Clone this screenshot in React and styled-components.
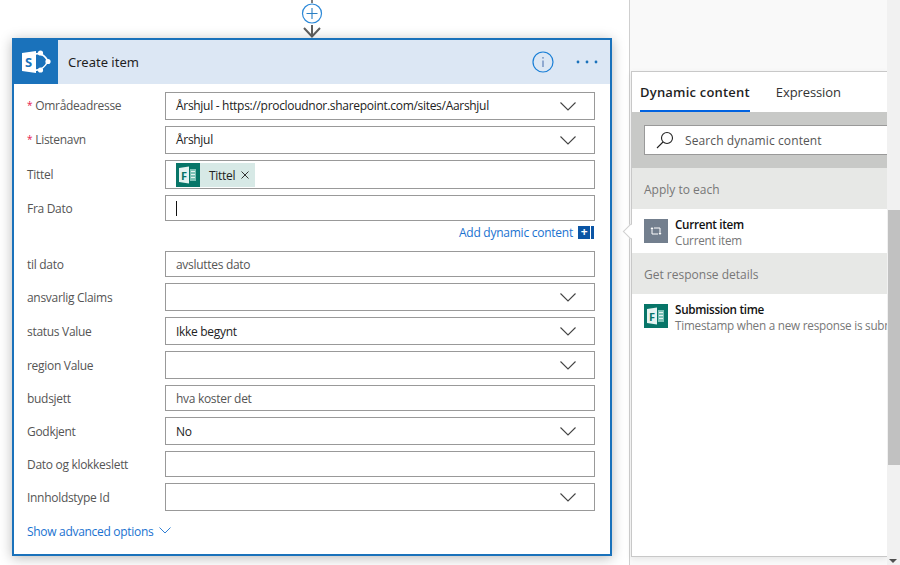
import React from 'react';
import styled, { createGlobalStyle } from 'styled-components';

const GlobalStyle = createGlobalStyle`
  html, body {
    margin: 0;
    padding: 0;
    height: 100%;
    overflow: hidden;
    background: #fff;
    font-family: "Open Sans", "Noto Sans", sans-serif;
  }
  * { box-sizing: border-box; }
`;

const Page = styled.div`
  display: flex;
  width: 900px;
  height: 565px;
  overflow: hidden;
`;

const Designer = styled.div`
  flex: 0 0 629px;
  display: flex;
  flex-direction: column;
  padding-left: 12px;
  background: #fff;
`;

const Connector = styled.svg`
  display: block;
  margin-left: 286px;
  flex: none;
`;

const Card = styled.section`
  width: 600px;
  height: 518px;
  border: 2px solid #1a72bb;
  background: #fff;
  box-shadow: 0 2px 12px rgba(0, 0, 0, 0.28);
`;

const CardHeader = styled.header`
  display: flex;
  align-items: center;
  height: 44px;
  background: #dce7f4;
`;

const Logo = styled.div`
  flex: 0 0 44px;
  height: 44px;
  background: #1a72bb;
  display: flex;
  align-items: center;
  justify-content: center;
`;

const CardTitle = styled.h2`
  flex: 1;
  margin: 0 0 0 10px;
  font-size: 13px;
  font-weight: 400;
  color: #1f1f1f;
  font-family: "Noto Sans", sans-serif;
`;

const HeaderIcon = styled.svg`
  display: block;
  margin-right: ${(p) => p.$gap}px;
`;

const Form = styled.div`
  display: flex;
  flex-direction: column;
  padding: 8px 16px 0 13px;
`;

const Row = styled.div`
  display: flex;
  align-items: flex-start;
  margin-bottom: 6px;
`;

const Label = styled.div`
  flex: 0 0 138px;
  height: ${(p) => p.$h}px;
  padding-bottom: ${(p) => (p.$raised ? 2 : 0)}px;
  display: flex;
  align-items: center;
  font-size: 12px;
  letter-spacing: -0.3px;
  color: #555;
`;

const Star = styled.span`
  color: #e5174d;
  font-size: 10px;
  margin-right: 3px;
`;

const Field = styled.div`
  position: relative;
  flex: 0 0 430px;
  height: ${(p) => p.$h}px;
  border: 1px solid #999;
  background: #fff;
  display: flex;
  align-items: center;
  padding-left: 10px;
  font-size: 12px;
  letter-spacing: -0.3px;
  color: ${(p) => (p.$muted ? '#555' : '#222')};
`;

const FieldText = styled.span`
  flex: 1;
  white-space: nowrap;
  padding-bottom: ${(p) => (p.$raised ? 2 : 0)}px;
`;

const Chevron = styled.svg`
  flex: none;
  margin-right: 18px;
  display: block;
`;

const Token = styled.div`
  display: flex;
  align-items: center;
  height: 24px;
  margin-top: 1px;
  background: #d7e9e6;
  padding-right: 6px;
`;

const TokenName = styled.span`
  margin: 0 6px 0 9px;
  font-size: 12px;
  color: #222;
`;

const Caret = styled.span`
  width: 1px;
  height: 15px;
  background: #111;
`;

const DynamicRow = styled.div`
  display: flex;
  justify-content: flex-end;
  align-items: center;
  height: 16px;
  margin: -3px 0 11px;
  font-size: 12px;
  letter-spacing: -0.25px;
  color: #1a72d0;
`;

const AddButton = styled.span`
  display: flex;
  margin-left: 5px;
  height: 13px;
  width: 16px;
  background: #0b55a5;
  color: #fff;
  font-size: 12px;
  font-weight: 700;
  line-height: 12px;
  justify-content: center;
  padding-right: 4px;
  box-shadow: inset -3px 0 0 #0b55a5, inset -4px 0 0 #fff;
`;

const Advanced = styled.div`
  display: flex;
  align-items: center;
  gap: 6px;
  margin-top: 6px;
  font-size: 12px;
  letter-spacing: -0.3px;
  color: #1a72d0;
`;

const SidePane = styled.aside`
  position: relative;
  flex: 1;
  display: flex;
  background: #f9f9f9;
  border-left: 1px solid #cfcfcf;
  padding-left: 1px;
`;

const Panel = styled.div`
  flex: 0 0 256px;
  display: flex;
  flex-direction: column;
  margin: 71px 0 8px;
  border: 1px solid #c8c8c8;
  border-right: none;
  background: #fff;
  overflow: hidden;
  box-shadow: 0 2px 6px rgba(0, 0, 0, 0.08);
`;

const Notch = styled.span`
  position: absolute;
  left: -5px;
  top: 226px;
  width: 11px;
  height: 11px;
  background: #fff;
  border-left: 1px solid #d0d0d0;
  border-bottom: 1px solid #d0d0d0;
  transform: rotate(45deg);
  z-index: 1;
`;

const Tabs = styled.div`
  display: flex;
  gap: 26px;
  height: 40px;
  padding-left: 8px;
  flex: none;
`;

const Tab = styled.div`
  display: flex;
  align-items: center;
  height: 40px;
  font-size: 13px;
  padding-top: 1px;
  color: ${(p) => (p.$active ? '#1f1f1f' : '#333')};
  font-weight: ${(p) => (p.$active ? 600 : 400)};
  letter-spacing: ${(p) => (p.$active ? 0.2 : -0.1)}px;
  border-bottom: 2px solid ${(p) => (p.$active ? '#0062e0' : 'transparent')};
`;

const SearchBand = styled.div`
  flex: none;
  height: 56px;
  background: #c8c9c7;
  padding: 13px 0 0 12px;
`;

const SearchBox = styled.div`
  display: flex;
  align-items: center;
  gap: 11px;
  height: 30px;
  width: 260px;
  padding-left: 11px;
  background: #fff;
  border: 1px solid #999;
  font-size: 12px;
  letter-spacing: 0.1px;
  color: #555;
`;

const SectionHead = styled.div`
  flex: none;
  display: flex;
  align-items: center;
  height: 41px;
  padding: 2px 0 0 12px;
  background: #e7e8e6;
  font-size: 12px;
  color: #777;
`;

const Item = styled.div`
  flex: none;
  display: flex;
  gap: 7px;
  height: ${(p) => p.$h}px;
  padding: 10px 0 0 12px;
  background: #fff;
  overflow: hidden;
`;

const ItemIcon = styled.div`
  flex: 0 0 24px;
  height: 24px;
  background: #737f8e;
  display: flex;
  align-items: center;
  justify-content: center;
`;

const ItemText = styled.div`
  display: flex;
  flex-direction: column;
  font-size: 11.7px;
  line-height: 16px;
  margin-top: -3px;
  white-space: nowrap;
`;

const ItemName = styled.span`
  color: #111;
  font-weight: 600;
  letter-spacing: -0.3px;
`;

const ItemDesc = styled.span`
  color: #777;
  letter-spacing: -0.22px;
`;

const Scrollbar = styled.div`
  position: relative;
  flex: 1;
  background: #f1f1f1;
`;

const ScrollThumb = styled.div`
  position: absolute;
  left: 1px;
  right: 0;
  top: 210px;
  height: 255px;
  background: #c1c1c1;
`;

const ScrollArrow = styled.span`
  position: absolute;
  left: 2px;
  bottom: 2px;
  border-left: 4px solid transparent;
  border-right: 4px solid transparent;
  border-top: 4px solid #505050;
`;

const FormsIcon = ({ size }) => (
  <svg width={size} height={size} viewBox="0 0 24 24" style={{ display: 'block', flex: 'none' }}>
    <rect width="24" height="24" fill="#077568" />
    <path d="M3 5 L13 3.5 V20.5 L3 19 Z" fill="#e6f3f1" />
    <rect x="14" y="6" width="6" height="12" fill="#7cc1b6" />
    <rect x="15" y="8" width="4" height="1" fill="#e6f3f1" />
    <rect x="15" y="11" width="4" height="1" fill="#e6f3f1" />
    <rect x="15" y="14" width="4" height="1" fill="#e6f3f1" />
    <text x="5" y="16.5" fontSize="11" fontWeight="700" fill="#077568" fontFamily="Open Sans, sans-serif">F</text>
  </svg>
);

const SharePointIcon = () => (
  <svg width="30" height="26" viewBox="0 0 30 26">
    <path d="M14 5 Q22 3 27 12 Q22 22 14 21" fill="none" stroke="#fff" strokeWidth="1.6" />
    <circle cx="19.5" cy="4" r="2.6" fill="#fff" />
    <circle cx="27" cy="12.5" r="2.6" fill="#fff" />
    <circle cx="19.5" cy="21" r="2.6" fill="#fff" />
    <path d="M1 4 L15 2 V24 L1 22 Z" fill="#fff" />
    <text x="4" y="18" fontSize="13" fontWeight="700" fill="#1a72bb" fontFamily="Open Sans, sans-serif">S</text>
  </svg>
);

const Down = () => (
  <Chevron width="16" height="9" viewBox="0 0 16 9">
    <path d="M0.5 0.5 L8 8 L15.5 0.5" fill="none" stroke="#444" strokeWidth="1.1" />
  </Chevron>
);

const rows = [
  { label: 'til dato', h: 26, text: 'avsluttes dato', muted: true },
  { label: 'ansvarlig Claims', h: 28, select: true },
  { label: 'status Value', h: 28, text: 'Ikke begynt', select: true },
  { label: 'region Value', h: 28, select: true },
  { label: 'budsjett', h: 26, text: 'hva koster det', muted: true },
  { label: 'Godkjent', h: 28, text: 'No', select: true },
  { label: 'Dato og klokkeslett', h: 26 },
  { label: 'Innholdstype Id', h: 28, select: true },
];

const App = () => (
  <>
    <GlobalStyle />
    <Page>
      <Designer>
        <Connector width="28" height="38" viewBox="0 0 28 38">
          <path d="M14 0 V3" stroke="#555" strokeWidth="1.5" />
          <circle cx="14" cy="13.5" r="9.5" fill="#fff" stroke="#2b88d8" strokeWidth="1.2" />
          <path d="M14 8 V19 M8.5 13.5 H19.5" stroke="#2b7fc4" strokeWidth="1.1" />
          <path d="M14 25 V37 M6 28 L14 36.5 L22 28" fill="none" stroke="#5f5f5f" strokeWidth="2" />
        </Connector>
        <Card>
          <CardHeader>
            <Logo><SharePointIcon /></Logo>
            <CardTitle>Create item</CardTitle>
            <HeaderIcon $gap={22} width="22" height="22" viewBox="0 0 22 22">
              <circle cx="11" cy="11" r="10" fill="none" stroke="#1a7fd6" strokeWidth="1.2" />
              <path d="M11 9.5 V16" stroke="#6f8fc0" strokeWidth="1.4" />
              <circle cx="11" cy="6.8" r="0.9" fill="#6f8fc0" />
            </HeaderIcon>
            <HeaderIcon $gap={12} width="22" height="4" viewBox="0 0 22 4">
              <circle cx="2" cy="2" r="1.4" fill="#1a72bb" />
              <circle cx="11" cy="2" r="1.4" fill="#1a72bb" />
              <circle cx="20" cy="2" r="1.4" fill="#1a72bb" />
            </HeaderIcon>
          </CardHeader>
          <Form>
            <Row>
              <Label $h={28} $raised><Star>*</Star>Områdeadresse</Label>
              <Field $h={28}>
                <FieldText $raised>Årshjul - https://procloudnor.sharepoint.com/sites/Aarshjul</FieldText>
                <Down />
              </Field>
            </Row>
            <Row>
              <Label $h={28} $raised><Star>*</Star>Listenavn</Label>
              <Field $h={28}>
                <FieldText $raised>Årshjul</FieldText>
                <Down />
              </Field>
            </Row>
            <Row>
              <Label $h={28}>Tittel</Label>
              <Field $h={29}>
                <Token>
                  <FormsIcon size={24} />
                  <TokenName>Tittel</TokenName>
                  <svg width="8" height="8" viewBox="0 0 8 8">
                    <path d="M0.5 0.5 L7.5 7.5 M7.5 0.5 L0.5 7.5" stroke="#333" strokeWidth="1" />
                  </svg>
                </Token>
              </Field>
            </Row>
            <Row>
              <Label $h={26}>Fra Dato</Label>
              <Field $h={26}><Caret /></Field>
            </Row>
            <DynamicRow>
              Add dynamic content
              <AddButton>+</AddButton>
            </DynamicRow>
            {rows.map((r) => (
              <Row key={r.label}>
                <Label $h={r.h}>{r.label}</Label>
                <Field $h={r.h} $muted={r.muted}>
                  <FieldText>{r.text}</FieldText>
                  {r.select && <Down />}
                </Field>
              </Row>
            ))}
            <Advanced>
              Show advanced options
              <svg width="12" height="7" viewBox="0 0 12 7" style={{ marginTop: -3 }}>
                <path d="M0.5 0.5 L6 6 L11.5 0.5" fill="none" stroke="#1a72d0" strokeWidth="0.9" />
              </svg>
            </Advanced>
          </Form>
        </Card>
      </Designer>
      <SidePane>
        <Notch />
        <Panel>
          <Tabs>
            <Tab $active>Dynamic content</Tab>
            <Tab>Expression</Tab>
          </Tabs>
          <SearchBand>
            <SearchBox>
              <svg width="18" height="18" viewBox="0 0 18 18" style={{ flex: 'none' }}>
                <circle cx="11" cy="7" r="5.5" fill="none" stroke="#222" strokeWidth="1.1" />
                <path d="M7 11 L1 17" stroke="#222" strokeWidth="1.1" />
              </svg>
              Search dynamic content
            </SearchBox>
          </SearchBand>
          <SectionHead>Apply to each</SectionHead>
          <Item $h={44}>
            <ItemIcon>
              <svg width="12" height="10" viewBox="0 0 12 10">
                <path d="M2 2 V8 H8 M10 8 V2 H4" fill="none" stroke="#fff" strokeWidth="1" />
                <path d="M8.5 7 H11.5 L10 9 Z M0.5 3 L2 1 L3.5 3 Z" fill="#fff" />
              </svg>
            </ItemIcon>
            <ItemText>
              <ItemName>Current item</ItemName>
              <ItemDesc>Current item</ItemDesc>
            </ItemText>
          </Item>
          <SectionHead>Get response details</SectionHead>
          <Item $h={60}>
            <FormsIcon size={24} />
            <ItemText>
              <ItemName>Submission time</ItemName>
              <ItemDesc>Timestamp when a new response is submitted</ItemDesc>
            </ItemText>
          </Item>
        </Panel>
        <Scrollbar>
          <ScrollThumb />
          <ScrollArrow />
        </Scrollbar>
      </SidePane>
    </Page>
  </>
);

export default App;
